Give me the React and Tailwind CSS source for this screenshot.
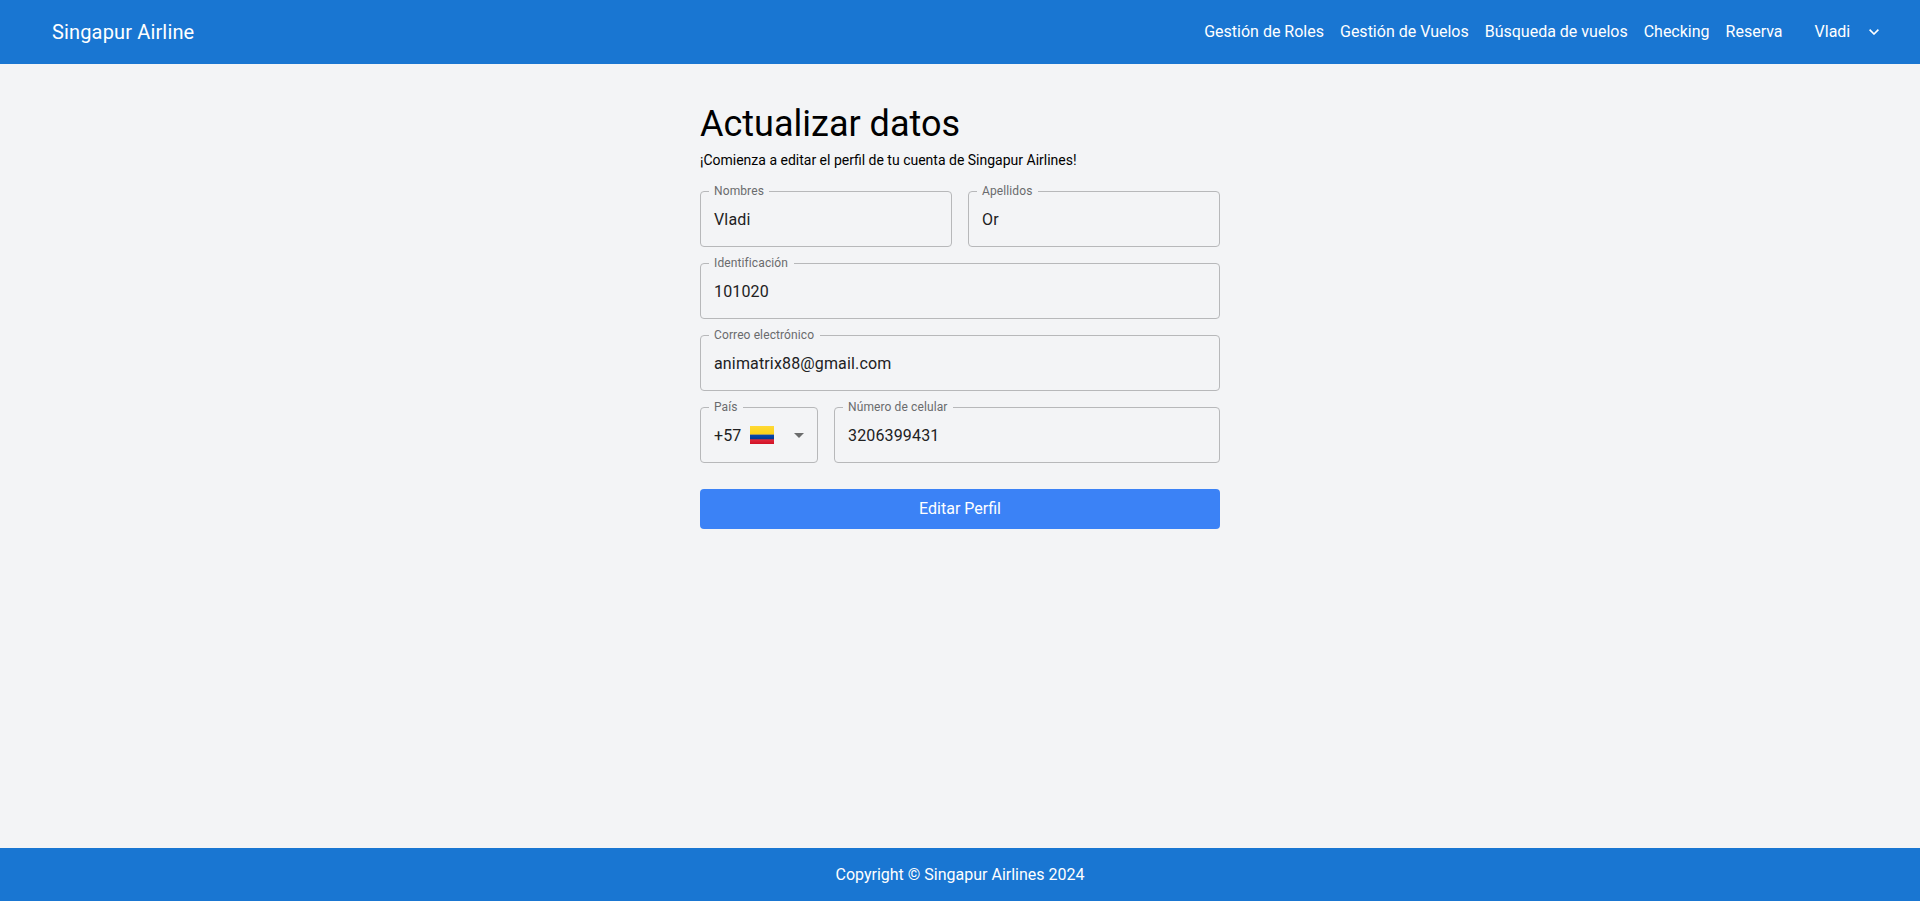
const NAV_LINKS = [
  "Gestión de Roles",
  "Gestión de Vuelos",
  "Búsqueda de vuelos",
  "Checking",
  "Reserva",
];

function ColombiaFlag() {
  return (
    <svg width="24" height="18" viewBox="0 0 24 18" className="ml-2 shrink-0" aria-hidden="true">
      <defs>
        <linearGradient id="flagYellow" x1="0" y1="0" x2="0" y2="1">
          <stop offset="0" stopColor="#ffd935" />
          <stop offset="1" stopColor="#fbd116" />
        </linearGradient>
        <linearGradient id="flagBlue" x1="0" y1="0" x2="0" y2="1">
          <stop offset="0" stopColor="#0748ae" />
          <stop offset="1" stopColor="#003993" />
        </linearGradient>
        <linearGradient id="flagRed" x1="0" y1="0" x2="0" y2="1">
          <stop offset="0" stopColor="#e02639" />
          <stop offset="1" stopColor="#d01125" />
        </linearGradient>
      </defs>
      <rect width="24" height="9" fill="url(#flagYellow)" />
      <rect y="8" width="24" height="1" fill="#a59a63" />
      <rect y="9" width="24" height="4" fill="url(#flagBlue)" />
      <rect y="13" width="24" height="1" fill="#a4304e" />
      <rect y="14" width="24" height="4" fill="url(#flagRed)" />
    </svg>
  );
}

function Field({ label, className = "", children }) {
  return (
    <div
      className={`relative flex h-14 items-center rounded border border-[#b7b8ba] pl-[13px] text-base tracking-[0.15px] text-[#212122] ${className}`}
    >
      <span className="absolute -top-2 left-2 bg-gray-100 pr-[5.5px] pl-[5px] text-xs leading-[14px] tracking-[0.1125px] text-[#6a6b6d]">
        {label}
      </span>
      {children}
    </div>
  );
}

export default function App() {
  return (
    <div className="flex h-[901px] flex-col bg-gray-100 font-[Roboto,sans-serif] text-black">
      <header className="flex h-16 shrink-0 items-center justify-between bg-[#1976d2] pr-[41px] pl-[52px] text-white">
        <span className="text-xl tracking-[0.15px]">Singapur Airline</span>
        <nav className="flex items-center gap-4">
          {NAV_LINKS.map((link) => (
            <a key={link} href="#">
              {link}
            </a>
          ))}
          <button className="ml-4 flex items-center gap-[18.75px]">
            Vladi
            <svg width="10" height="6" viewBox="0 0 10 6" fill="none" stroke="currentColor" strokeWidth="1.6" aria-hidden="true">
              <path d="M0.6 0.6 5 5 9.4 0.6" />
            </svg>
          </button>
        </nav>
      </header>

      <main className="flex flex-1 justify-center">
        <form className="w-[520px] pt-10">
          <h1 className="text-4xl leading-10">Actualizar datos</h1>
          <p className="mt-1.5 text-sm leading-5">
            ¡Comienza a editar el perfil de tu cuenta de Singapur Airlines!
          </p>
          <div className="mt-[21px] flex flex-col gap-4">
            <div className="flex gap-4">
              <Field label="Nombres" className="flex-1"><span className="pt-0.5">Vladi</span></Field>
              <Field label="Apellidos" className="flex-1"><span className="pt-0.5">Or</span></Field>
            </div>
            <Field label="Identificación"><span className="pt-0.5">101020</span></Field>
            <Field label="Correo electrónico"><span className="pt-0.5">animatrix88@gmail.com</span></Field>
            <div className="flex gap-4">
              <Field label="País" className="w-[118px]">
                <span className="pt-0.5">+57</span>
                <ColombiaFlag />
                <svg width="10" height="5" viewBox="0 0 10 5" className="mr-[13px] ml-auto" aria-hidden="true">
                  <path d="M0 0h10L5 5z" fill="#6b6c6d" />
                </svg>
              </Field>
              <Field label="Número de celular" className="flex-1"><span className="pt-0.5">3206399431</span></Field>
            </div>
          </div>
          <button className="mt-[26px] h-10 w-full rounded bg-[#3b82f6] text-white">
            Editar Perfil
          </button>
        </form>
      </main>

      <footer className="flex h-[53px] shrink-0 items-center justify-center bg-[#1976d2] text-white">
        Copyright © Singapur Airlines 2024
      </footer>
    </div>
  );
}
